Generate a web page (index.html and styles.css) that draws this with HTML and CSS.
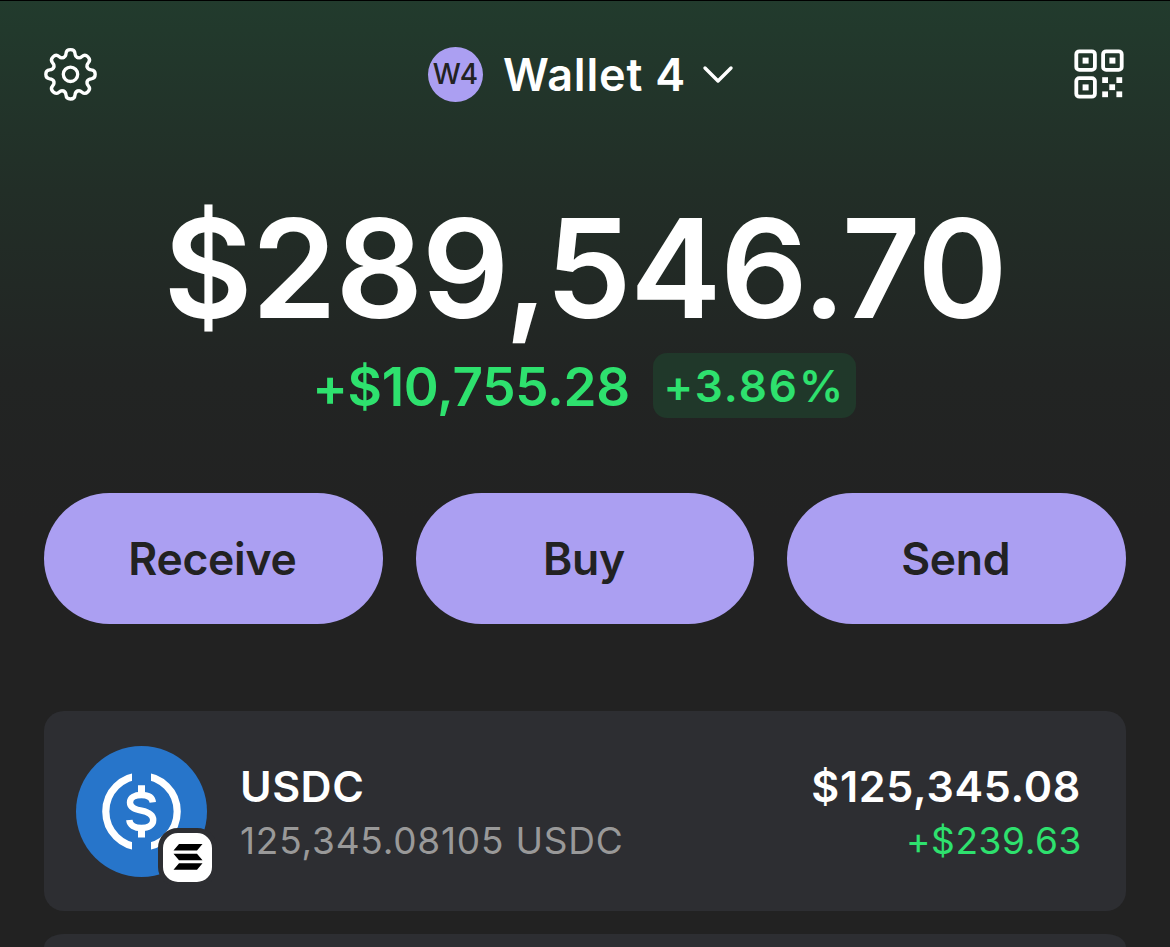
FILE: index.html
```html
<!DOCTYPE html>
<html lang="en">
<head>
  <meta charset="UTF-8">
  <meta name="viewport" content="width=device-width, initial-scale=1.0">
  <title>Wallet 4</title>
  <link rel="stylesheet" href="styles.css">
</head>
<body>
  <header class="top-bar">
    <button class="icon-button" aria-label="Settings">
      <svg width="54" height="54" viewBox="-26.5 -27.3 54 54" fill="none" stroke="#fff" stroke-width="3.3" stroke-linecap="round">
        <defs>
          <path id="tooth" d="M-6.9-16.8C-5.2-17.5-4.6-18.8-4.5-20.8C-4.3-23.6-2.4-24.7-0-24.7C2.4-24.7 4.3-23.6 4.5-20.8C4.6-18.8 5.2-17.5 6.9-16.8"/>
        </defs>
        <use href="#tooth"/>
        <use href="#tooth" transform="rotate(45)"/>
        <use href="#tooth" transform="rotate(90)"/>
        <use href="#tooth" transform="rotate(135)"/>
        <use href="#tooth" transform="rotate(180)"/>
        <use href="#tooth" transform="rotate(225)"/>
        <use href="#tooth" transform="rotate(270)"/>
        <use href="#tooth" transform="rotate(315)"/>
        <circle r="7.2"/>
      </svg>
    </button>

    <button class="wallet-switch">
      <span class="avatar">W4</span>
      <span class="wallet-name">Wallet 4</span>
      <svg width="32" height="20" viewBox="0 0 32 20" fill="none" stroke="#fff" stroke-width="3.4" stroke-linecap="round" stroke-linejoin="round">
        <path d="M3 4L16 17L29 4"/>
      </svg>
    </button>

    <button class="icon-button" aria-label="Scan QR code">
      <svg width="50" height="50" viewBox="0 0 50 50">
        <g fill="none" stroke="#fff" stroke-width="3.8">
          <rect x="2.3" y="2.3" width="18.6" height="18.6" rx="3"/>
          <rect x="29.1" y="2.3" width="18.6" height="18.6" rx="3"/>
          <rect x="2.3" y="29.1" width="18.6" height="18.6" rx="3"/>
        </g>
        <g fill="#fff">
          <rect x="8.6" y="8.6" width="6" height="6"/>
          <rect x="35.4" y="8.6" width="6" height="6"/>
          <rect x="8.6" y="35.4" width="6" height="6"/>
          <rect x="28.2" y="28.2" width="5.8" height="5.8"/>
          <rect x="42.4" y="28.2" width="5.8" height="5.8"/>
          <rect x="35.3" y="35.3" width="5.8" height="5.8"/>
          <rect x="28.2" y="42.4" width="5.8" height="5.8"/>
          <rect x="42.4" y="42.4" width="5.8" height="5.8"/>
        </g>
      </svg>
    </button>
  </header>

  <main>
    <section class="balance">
      <h1 class="total">$289,546.70</h1>
      <div class="change">
        <span class="change-amount">+$10,755.28</span>
        <span class="change-percent">+3.86%</span>
      </div>
    </section>

    <div class="actions">
      <button class="action-button">Receive</button>
      <button class="action-button">Buy</button>
      <button class="action-button">Send</button>
    </div>

    <section class="tokens">
      <div class="token-card">
        <div class="token-icon">
          <svg width="131" height="131" viewBox="0 0 131 131" fill="none" stroke="#fff">
            <circle cx="65.5" cy="65.5" r="65.5" fill="#2775ca" stroke="none"/>
            <circle cx="65.5" cy="65.5" r="35.7" stroke-width="7.2"/>
            <rect x="56" y="22" width="19" height="87" fill="#2775ca" stroke="none"/>
            <path stroke-width="6.4" d="M76.8 56.4C76.3 51.5 72 49 65.5 49C58.5 49 54 51.6 54 56.4C54 61.5 58.5 63.2 65.5 64.7C73 66.3 77.2 68.6 77.2 74C77.2 79 72.5 82 65.5 82C58.5 82 53.8 79.2 53.3 74"/>
            <path stroke-width="7" d="M65.5 39.2V48.5M65.5 82.5V91.6"/>
          </svg>
          <span class="network-badge">
            <svg width="30" height="28" viewBox="0.5 0 30 28">
              <path d="M6.5 1H30L24.5 7.5H1Z M1 10.8H24.5L30 17.3H6.5Z M6.5 20.2H30L24.5 26.7H1Z"/>
            </svg>
          </span>
        </div>
        <div class="token-info">
          <h2 class="token-name">USDC</h2>
          <p class="token-amount">125,345.08105 USDC</p>
        </div>
        <div class="token-value">
          <p class="token-price">$125,345.08</p>
          <p class="token-change">+$239.63</p>
        </div>
      </div>
      <div class="token-card-peek"></div>
    </section>
  </main>
</body>
</html>
```

FILE: styles.css
```css
* {
  margin: 0;
  padding: 0;
  box-sizing: border-box;
  font-family: Inter, "Liberation Sans", sans-serif;
}

body {
  height: 947px;
  overflow: hidden;
  border-top: 1px solid #000;
  padding: 0 44px;
  color: #fff;
  background: linear-gradient(#223b2d 0, #222e27 190px, #222423 380px, #222222 520px);
}

button {
  border: none;
  background: none;
  color: inherit;
  cursor: pointer;
}

svg {
  display: block;
}

.top-bar {
  display: flex;
  justify-content: space-between;
  align-items: center;
  height: 146px;
  padding-right: 2px;
}

.wallet-switch {
  display: flex;
  align-items: center;
  margin-right: 10px;
}

.avatar {
  width: 55px;
  height: 55px;
  margin-right: 20px;
  border-radius: 50%;
  background: #ab9ff2;
  color: #222;
  font-size: 28px;
  font-weight: 550;
  line-height: 55px;
  text-align: center;
}

.wallet-name {
  margin-right: 16px;
  font-size: 45px;
  font-weight: 600;
  line-height: 55px;
  letter-spacing: 0.8px;
}

.balance {
  display: flex;
  flex-direction: column;
  align-items: center;
}

.total {
  margin-top: 41px;
  font-size: 137px;
  font-weight: 570;
  line-height: 160px;
  letter-spacing: -1.3px;
}

.change {
  display: flex;
  align-items: center;
  gap: 23px;
  margin-top: 5px;
  padding-right: 2px;
  color: #2ee16e;
}

.change-amount {
  padding-top: 3px;
  font-size: 53px;
  font-weight: 580;
  line-height: 62px;
  letter-spacing: -0.3px;
}

.change-percent {
  width: 203px;
  padding-top: 2px;
  border-radius: 14px;
  background: #20382a;
  font-size: 44px;
  font-weight: 560;
  line-height: 63px;
  letter-spacing: 2px;
  text-align: center;
}

.actions {
  display: grid;
  grid-template-columns: repeat(3, 1fr);
  gap: 33px;
  margin-top: 75px;
}

.action-button {
  height: 131px;
  padding-right: 2px;
  border-radius: 66px;
  background: #ab9ff2;
  color: #222;
  font-size: 44.5px;
  font-weight: 570;
  letter-spacing: -0.3px;
}

.tokens {
  display: flex;
  flex-direction: column;
  gap: 23px;
  margin-top: 87px;
}

.token-card {
  display: flex;
  align-items: center;
  height: 200px;
  padding: 0 45px 0 32px;
  border-radius: 20px;
  background: #2d2e32;
}

.token-card-peek {
  height: 13px;
  border-radius: 20px 20px 0 0 / 13px 13px 0 0;
  background: #2d2e32;
}

.token-icon {
  position: relative;
  margin-right: 33px;
}

.network-badge {
  position: absolute;
  right: -10px;
  bottom: -10px;
  display: flex;
  align-items: center;
  justify-content: center;
  width: 59px;
  height: 59px;
  border: 5px solid #2d2e32;
  border-radius: 20px;
  background: #fff;
}

.token-info,
.token-value {
  padding-top: 3px;
}

.token-value {
  margin-left: auto;
  text-align: right;
}

.token-name,
.token-price {
  font-size: 43px;
  font-weight: 600;
  line-height: 56px;
}

.token-name {
  letter-spacing: 0.5px;
}

.token-price {
  letter-spacing: 0.7px;
}

.token-amount,
.token-change {
  font-size: 37px;
  line-height: 54px;
}

.token-amount {
  color: #999;
  letter-spacing: 0.8px;
}

.token-change {
  margin-right: -1px;
  color: #2ee16e;
  letter-spacing: 0.6px;
}
```
